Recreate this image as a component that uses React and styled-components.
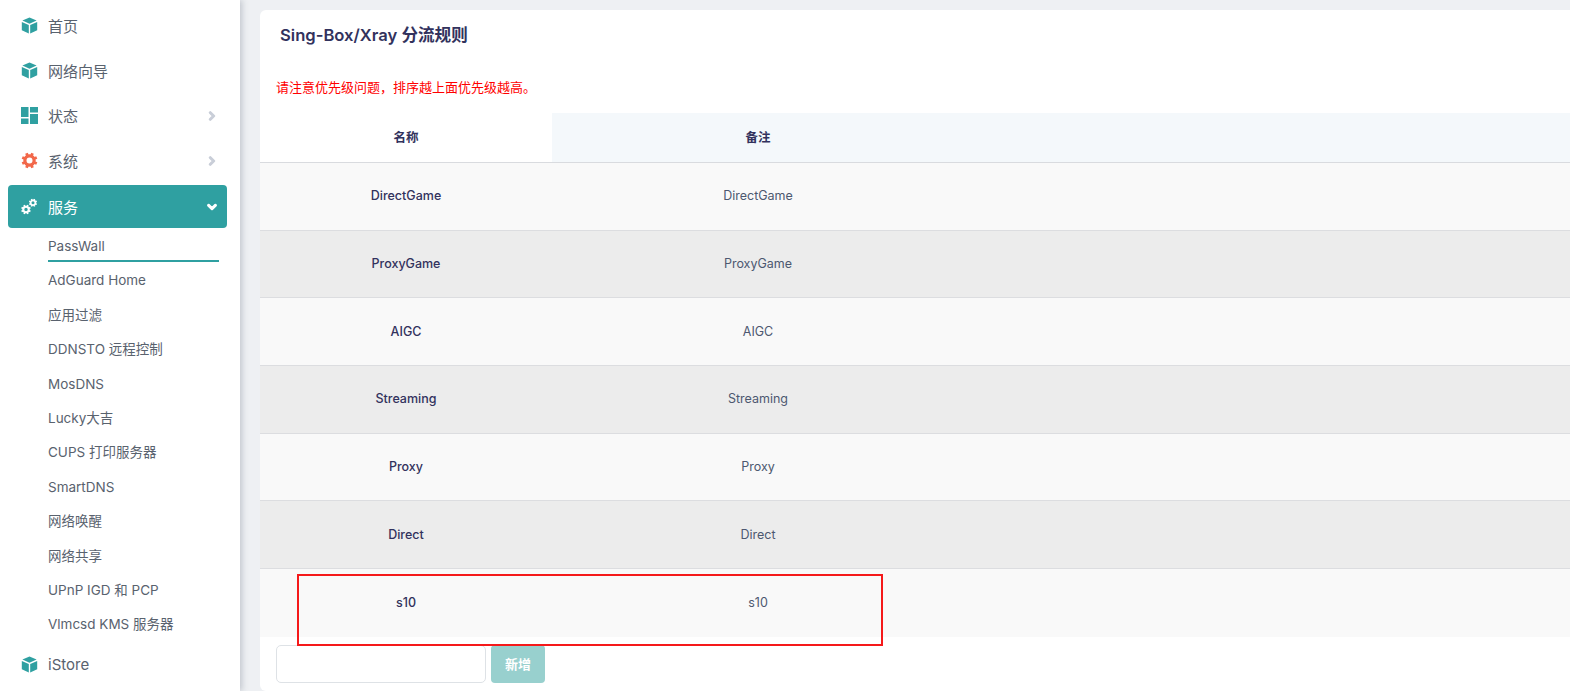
import React from 'react';
import styled, { createGlobalStyle } from 'styled-components';
import { FaChevronRight, FaChevronDown } from 'react-icons/fa';

const GlobalStyle = createGlobalStyle`
  html, body {
    margin: 0;
    height: 100%;
    overflow: hidden;
    background: #eef0f3;
    font-family: Inter, "Noto Sans CJK SC", sans-serif;
  }
`;

const Page = styled.div`
  display: flex;
  height: 691px;
  width: 1570px;
  overflow: hidden;
`;

const Sidebar = styled.aside`
  width: 240px;
  flex: none;
  box-sizing: border-box;
  padding: 3px 13px 0 8px;
  background: #fff;
  box-shadow: 2px 0 6px rgba(60, 70, 90, 0.25);
  z-index: 1;
  height: 691px;
  overflow: hidden;
`;

const NavItem = styled.div`
  display: flex;
  align-items: center;
  height: ${(p) => (p.$active ? '43px' : '45px')};
  margin-top: ${(p) => (p.$active ? '2px' : '0')};
  padding: 0 10px 0 13px;
  border-radius: 4px;
  font-size: 15px;
  color: ${(p) => (p.$active ? '#fff' : '#59626e')};
  background: ${(p) => (p.$active ? '#2fa0a1' : 'transparent')};
`;

const NavIcon = styled.span`
  display: flex;
  align-items: center;
  justify-content: center;
  width: 17px;
  margin-right: 10px;
  color: ${(p) => p.$color || '#2fa0a1'};
`;

const NavLabel = styled.span`
  flex: 1;
`;

const Arrow = styled.span`
  display: flex;
  font-size: 10px;
  color: ${(p) => (p.$active ? '#fff' : '#c9ced8')};

  svg {
    stroke-width: 70px;
  }
`;

const SubList = styled.div`
  display: flex;
  flex-direction: column;
  padding: 0 8px 1px 40px;
`;

const SubItem = styled.div`
  height: 34.4px;
  line-height: 37px;
  font-size: 13.5px;
  color: #59626e;
  white-space: nowrap;
  box-sizing: border-box;
  border-bottom: ${(p) => (p.$active ? '2px solid #2fa0a1' : 'none')};
`;

const Main = styled.main`
  flex: 1;
  min-width: 0;
  padding: 10px 0 0 20px;
`;

const Card = styled.section`
  position: relative;
  background: #fff;
  border-radius: 6px 0 0 6px;
  height: 681px;
  overflow: hidden;
`;

const Title = styled.h2`
  margin: 0;
  padding: 14px 0 0 20px;
  font-size: 16.6px;
  line-height: 22px;
  font-weight: 600;
  color: #32325d;
`;

const Notice = styled.p`
  margin: 0;
  padding: 31px 0 0 16px;
  font-size: 13px;
  line-height: 20px;
  color: #f00;
`;

const Table = styled.div`
  margin-top: 16px;
`;

const Row = styled.div`
  display: grid;
  grid-template-columns: 292px 412px 1fr;
  height: ${(p) => p.$height || '67.7px'};
  box-sizing: border-box;
  padding-bottom: 1px;
  align-items: center;
  background: ${(p) => (p.$odd ? '#ececec' : '#f9f9f9')};
  border-bottom: ${(p) => (p.$last ? 'none' : '1px solid #dcdde0')};
  font-size: 12.5px;
  text-align: center;
  color: #4d5870;
`;

const HeadRow = styled(Row)`
  background: #fff;
  align-items: stretch;
  padding-bottom: 0;
  border-bottom: 1px solid #d9dbdf;
  font-weight: 600;
  color: #32325d;
`;

const HeadCell = styled.div`
  display: flex;
  align-items: center;
  justify-content: center;
  padding-bottom: 2px;
  background: ${(p) => (p.$tint ? '#f4f8fb' : 'transparent')};
`;

const NameCell = styled.div`
  font-weight: 500;
  color: #32325d;
`;

const NoteCell = styled.div``;

const AddRow = styled.div`
  display: flex;
  gap: 5px;
  padding: 8px 0 0 16px;
`;

const NameInput = styled.input`
  width: 210px;
  height: 38px;
  box-sizing: border-box;
  border: 1px solid #dee2e6;
  border-radius: 5px;
  background: #fff;
  outline: none;
`;

const AddButton = styled.button`
  width: 54px;
  height: 38px;
  border: none;
  border-radius: 4px;
  background: #98d0ce;
  color: #fff;
  font-family: inherit;
  font-size: 13px;
  font-weight: 600;
`;

const Highlight = styled.div`
  position: absolute;
  left: 37px;
  top: 564px;
  width: 586px;
  height: 72px;
  box-sizing: border-box;
  border: 2px solid #f5191a;
`;

const CubeIcon = () => (
  <svg width="17" height="17" viewBox="0 0 17 17" fill="currentColor">
    <path d="M8.5 0.5 15.6 3.6 8.5 6.7 1.4 3.6Z" />
    <path d="M0.8 5 7.8 8.1V16.6L0.8 13.3Z" />
    <path d="M16.2 5 9.2 8.1V16.6L16.2 13.3Z" />
  </svg>
);

const DashboardIcon = () => (
  <svg width="17" height="17" viewBox="0 0 17 17" fill="currentColor">
    <rect x="0" y="0" width="7.5" height="10" />
    <rect x="0" y="11.5" width="7.5" height="5.5" />
    <rect x="9" y="0" width="8" height="5.5" />
    <rect x="9" y="7" width="8" height="10" />
  </svg>
);

// ring from hole to r, with square teeth just outside it
const Gear = ({ cx, cy, r, hole, width }) => (
  <g>
    <circle
      cx={cx}
      cy={cy}
      r={(r + hole) / 2}
      fill="none"
      stroke="currentColor"
      strokeWidth={r - hole}
    />
    {[0, 1, 2, 3, 4, 5, 6, 7].map((i) => (
      <rect
        key={i}
        x={cx - width / 2}
        y={cy - r - width * 0.6}
        width={width}
        height={width}
        fill="currentColor"
        transform={`rotate(${45 * i + 22.5} ${cx} ${cy})`}
      />
    ))}
  </g>
);

const CogIcon = () => (
  <svg width="17" height="17" viewBox="0 0 17 17">
    <Gear cx={8.5} cy={8.5} r={6.2} hole={3} width={2.8} />
  </svg>
);

const CogsIcon = () => (
  <svg width="17" height="17" viewBox="0 0 17 17">
    <Gear cx={5} cy={11.5} r={3.8} hole={1.7} width={1.7} />
    <Gear cx={12} cy={4.8} r={3.2} hole={1.5} width={1.5} />
  </svg>
);

const services = [
  'AdGuard Home',
  '应用过滤',
  'DDNSTO 远程控制',
  'MosDNS',
  'Lucky大吉',
  'CUPS 打印服务器',
  'SmartDNS',
  '网络唤醒',
  '网络共享',
  'UPnP IGD 和 PCP',
  'Vlmcsd KMS 服务器',
];

const rules = ['DirectGame', 'ProxyGame', 'AIGC', 'Streaming', 'Proxy', 'Direct', 's10'];

const App = () => {
  return (
    <Page>
      <GlobalStyle />
      <Sidebar>
        <NavItem>
          <NavIcon><CubeIcon /></NavIcon>
          <NavLabel>首页</NavLabel>
        </NavItem>
        <NavItem>
          <NavIcon><CubeIcon /></NavIcon>
          <NavLabel>网络向导</NavLabel>
        </NavItem>
        <NavItem>
          <NavIcon><DashboardIcon /></NavIcon>
          <NavLabel>状态</NavLabel>
          <Arrow><FaChevronRight /></Arrow>
        </NavItem>
        <NavItem>
          <NavIcon $color="#f2684a"><CogIcon /></NavIcon>
          <NavLabel>系统</NavLabel>
          <Arrow><FaChevronRight /></Arrow>
        </NavItem>
        <NavItem $active>
          <NavIcon $color="#fff"><CogsIcon /></NavIcon>
          <NavLabel>服务</NavLabel>
          <Arrow $active><FaChevronDown /></Arrow>
        </NavItem>
        <SubList>
          <SubItem $active>PassWall</SubItem>
          {services.map((name) => (
            <SubItem key={name}>{name}</SubItem>
          ))}
        </SubList>
        <NavItem>
          <NavIcon><CubeIcon /></NavIcon>
          <NavLabel>iStore</NavLabel>
        </NavItem>
      </Sidebar>
      <Main>
        <Card>
          <Title>Sing-Box/Xray 分流规则</Title>
          <Notice>请注意优先级问题，排序越上面优先级越高。</Notice>
          <Table>
            <HeadRow $height="50px">
              <HeadCell>名称</HeadCell>
              <HeadCell $tint>备注</HeadCell>
              <HeadCell $tint />
            </HeadRow>
            {rules.map((name, i) => (
              <Row key={name} $odd={i % 2 === 1} $last={i === rules.length - 1}>
                <NameCell>{name}</NameCell>
                <NoteCell>{name}</NoteCell>
              </Row>
            ))}
          </Table>
          <AddRow>
            <NameInput />
            <AddButton>新增</AddButton>
          </AddRow>
          <Highlight />
        </Card>
      </Main>
    </Page>
  );
};

export default App;
